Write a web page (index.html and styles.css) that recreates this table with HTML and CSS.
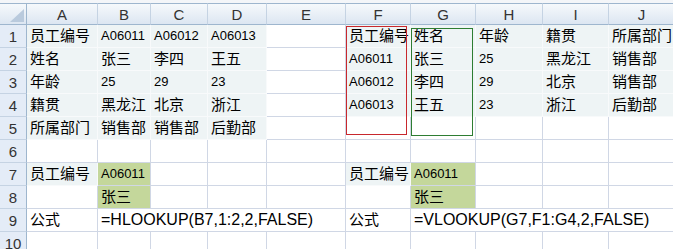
FILE: index.html
```html
<!DOCTYPE html>
<html lang="zh-CN">

<head>
    <meta charset="UTF-8">
    <title>HLOOKUP / VLOOKUP</title>
    <link rel="stylesheet" href="styles.css">
</head>

<body>
    <div class="sheet-wrap">
        <div class="sheet">
            <!-- column headers -->
            <div class="corner"><span class="tri"></span></div>
            <div class="hd">A</div>
            <div class="hd">B</div>
            <div class="hd">C</div>
            <div class="hd">D</div>
            <div class="hd">E</div>
            <div class="hd">F</div>
            <div class="hd">G</div>
            <div class="hd">H</div>
            <div class="hd">I</div>
            <div class="hd">J</div>

            <!-- row 1 -->
            <div class="rh">1</div>
            <div class="c f">员工编号</div>
            <div class="c f num">A06011</div>
            <div class="c f num">A06012</div>
            <div class="c f num">A06013</div>
            <div class="c"></div>
            <div class="c f">员工编号</div>
            <div class="c f">姓名</div>
            <div class="c f">年龄</div>
            <div class="c f">籍贯</div>
            <div class="c f">所属部门</div>

            <!-- row 2 -->
            <div class="rh">2</div>
            <div class="c f">姓名</div>
            <div class="c f">张三</div>
            <div class="c f">李四</div>
            <div class="c f">王五</div>
            <div class="c"></div>
            <div class="c f num">A06011</div>
            <div class="c f">张三</div>
            <div class="c f num">25</div>
            <div class="c f">黑龙江</div>
            <div class="c f">销售部</div>

            <!-- row 3 -->
            <div class="rh">3</div>
            <div class="c f">年龄</div>
            <div class="c f num">25</div>
            <div class="c f num">29</div>
            <div class="c f num">23</div>
            <div class="c"></div>
            <div class="c f num">A06012</div>
            <div class="c f">李四</div>
            <div class="c f num">29</div>
            <div class="c f">北京</div>
            <div class="c f">销售部</div>

            <!-- row 4 -->
            <div class="rh">4</div>
            <div class="c f">籍贯</div>
            <div class="c f">黑龙江</div>
            <div class="c f">北京</div>
            <div class="c f">浙江</div>
            <div class="c"></div>
            <div class="c f num">A06013</div>
            <div class="c f">王五</div>
            <div class="c f num">23</div>
            <div class="c f">浙江</div>
            <div class="c f">后勤部</div>

            <!-- row 5 -->
            <div class="rh">5</div>
            <div class="c f">所属部门</div>
            <div class="c f">销售部</div>
            <div class="c f">销售部</div>
            <div class="c f">后勤部</div>
            <div class="c"></div>
            <div class="c"></div>
            <div class="c"></div>
            <div class="c"></div>
            <div class="c"></div>
            <div class="c"></div>

            <!-- row 6 -->
            <div class="rh">6</div>
            <div class="c"></div>
            <div class="c"></div>
            <div class="c"></div>
            <div class="c"></div>
            <div class="c"></div>
            <div class="c"></div>
            <div class="c"></div>
            <div class="c"></div>
            <div class="c"></div>
            <div class="c"></div>

            <!-- row 7 -->
            <div class="rh">7</div>
            <div class="c f">员工编号</div>
            <div class="c g num">A06011</div>
            <div class="c"></div>
            <div class="c"></div>
            <div class="c"></div>
            <div class="c f">员工编号</div>
            <div class="c g num">A06011</div>
            <div class="c"></div>
            <div class="c"></div>
            <div class="c"></div>

            <!-- row 8 -->
            <div class="rh">8</div>
            <div class="c"></div>
            <div class="c g">张三</div>
            <div class="c"></div>
            <div class="c"></div>
            <div class="c"></div>
            <div class="c"></div>
            <div class="c g">张三</div>
            <div class="c"></div>
            <div class="c"></div>
            <div class="c"></div>

            <!-- row 9: formulas spill over the empty cells on the right -->
            <div class="rh">9</div>
            <div class="c">公式</div>
            <div class="c fx span4">=HLOOKUP(B7,1:2,2,FALSE)</div>
            <div class="c">公式</div>
            <div class="c fx span4">=VLOOKUP(G7,F1:G4,2,FALSE)</div>

            <!-- row 10 -->
            <div class="rh">10</div>
            <div class="c"></div>
            <div class="c"></div>
            <div class="c"></div>
            <div class="c"></div>
            <div class="c"></div>
            <div class="c"></div>
            <div class="c"></div>
            <div class="c"></div>
            <div class="c"></div>
            <div class="c"></div>
        </div>

        <!-- outlines drawn over the lookup columns -->
        <div class="box box-red"></div>
        <div class="box box-green"></div>
    </div>
</body>

</html>
```

FILE: styles.css
```css
* {
    box-sizing: border-box;
    margin: 0;
    padding: 0;
}

body {
    background-color: #ffffff;
    overflow: hidden;
    font-family: "Liberation Sans", "Noto Sans CJK SC", sans-serif;
}

.sheet-wrap {
    position: relative;
    padding-top: 3px;
    background-color: #f4f6f9;
    width: 700px;
}

.sheet {
    display: grid;
    grid-template-columns: 27px 71px 53px 57px 59px 79px 65px 65px 67px 66px 66px;
    grid-template-rows: 22px repeat(10, 23px);
    background-color: #ffffff;
}

.corner,
.hd {
    background: linear-gradient(#f6f9fc, #dce6f2);
    border-top: 1px solid #9eb6ce;
    border-bottom: 1px solid #9eb6ce;
    border-right: 1px solid #c5d3e3;
}

.corner {
    position: relative;
    border-right-color: #9eb6ce;
}

.tri {
    position: absolute;
    right: 2px;
    bottom: 2px;
    width: 0;
    height: 0;
    border-left: 14px solid transparent;
    border-bottom: 13px solid #b9cadd;
}

.hd {
    display: flex;
    align-items: center;
    justify-content: center;
    font-size: 15px;
    color: #333333;
}

.rh {
    display: flex;
    align-items: center;
    justify-content: center;
    background-color: #e4ecf7;
    border-right: 1px solid #9eb6ce;
    border-bottom: 1px solid #c5d3e3;
    font-size: 15px;
    color: #333333;
    padding-top: 1px;
}

.c {
    display: flex;
    align-items: flex-end;
    padding: 0 0 2px 3px;
    border-right: 1px solid #d0d7e5;
    border-bottom: 1px solid #d0d7e5;
    font-size: 15px;
    line-height: 18px;
    color: #000000;
    white-space: nowrap;
}

.c.f {
    background-color: #eef4f5;
    border-right-color: #f8fafb;
    border-bottom-color: #f8fafb;
}

.c.g {
    background-color: #c4d79b;
}

.num {
    font-size: 13px;
}

.fx {
    font-size: 16px;
}

.span4 {
    grid-column: span 4;
}

.box {
    position: absolute;
    border: 1px solid;
}

.box-red {
    left: 346px;
    top: 26px;
    width: 61px;
    height: 109px;
    border-color: #c8282d;
}

.box-green {
    left: 411px;
    top: 28px;
    width: 62px;
    height: 108px;
    border-color: #2e7d32;
}
```
